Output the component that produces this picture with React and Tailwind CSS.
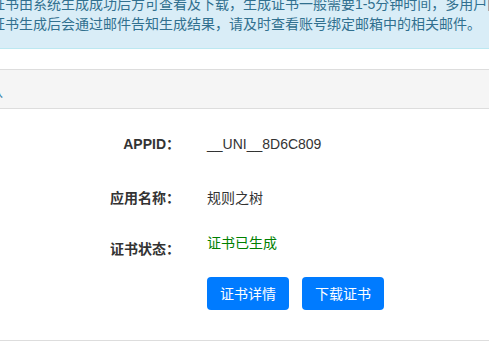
import React from 'react';

const font = { fontFamily: '"Liberation Sans", "Noto Sans CJK SC", sans-serif' };

function Row({ label, children, labelPad = '' }) {
  return (
    <div className="flex items-start">
      <div className={`w-[203px] shrink-0 text-right font-bold text-[#333] leading-[20px] ${labelPad}`}>{label}</div>
      <div className="ml-[27px] leading-[20px] text-[#333]">{children}</div>
    </div>
  );
}

export default function App() {
  return (
    <div className="w-[489px] h-[341px] overflow-hidden bg-white text-[14px]" style={font}>
      <div className="ml-[-24px] mt-[-21px] w-[540px]">
        {/* notice */}
        <div className="border border-[#bce8f1] bg-[#d9edf7] text-[#31708f] px-[14px] pt-[14px] pb-[14px] leading-[20px] whitespace-nowrap">
          <div>证书由系统生成成功后方可查看及下载，生成证书一般需要1-5分钟时间，多用户同时申请时请耐心等待。</div>
          <div>证书生成后会通过邮件告知生成结果，请及时查看账号绑定邮箱中的相关邮件。</div>
        </div>

        {/* panel */}
        <div className="mt-[20px] border border-[#ddd]">
          <div className="h-[39px] flex items-center bg-[#f5f5f5] border-b border-[#ddd] px-[12px]">
            <span className="text-[#3a87ad] leading-[20px] mt-[4px]">认</span>
          </div>
          <div className="pt-[25px] pb-[30px]">
            <Row label="APPID：">__UNI__8D6C809</Row>
            <div className="mt-[34px]">
              <Row label="应用名称：">规则之树</Row>
            </div>
            <div className="mt-[25px]">
              <Row label="证书状态：" labelPad="pt-[6px]">
                <span className="text-[#008000]">证书已生成</span>
              </Row>
            </div>
            <div className="mt-[18px] ml-[230px] flex gap-[13px]">
              <button className="h-[33px] px-[13px] rounded-[4px] bg-[#007bff] text-white leading-[20px]">证书详情</button>
              <button className="h-[33px] px-[13px] rounded-[4px] bg-[#007bff] text-white leading-[20px]">下载证书</button>
            </div>
          </div>
        </div>
      </div>
    </div>
  );
}
